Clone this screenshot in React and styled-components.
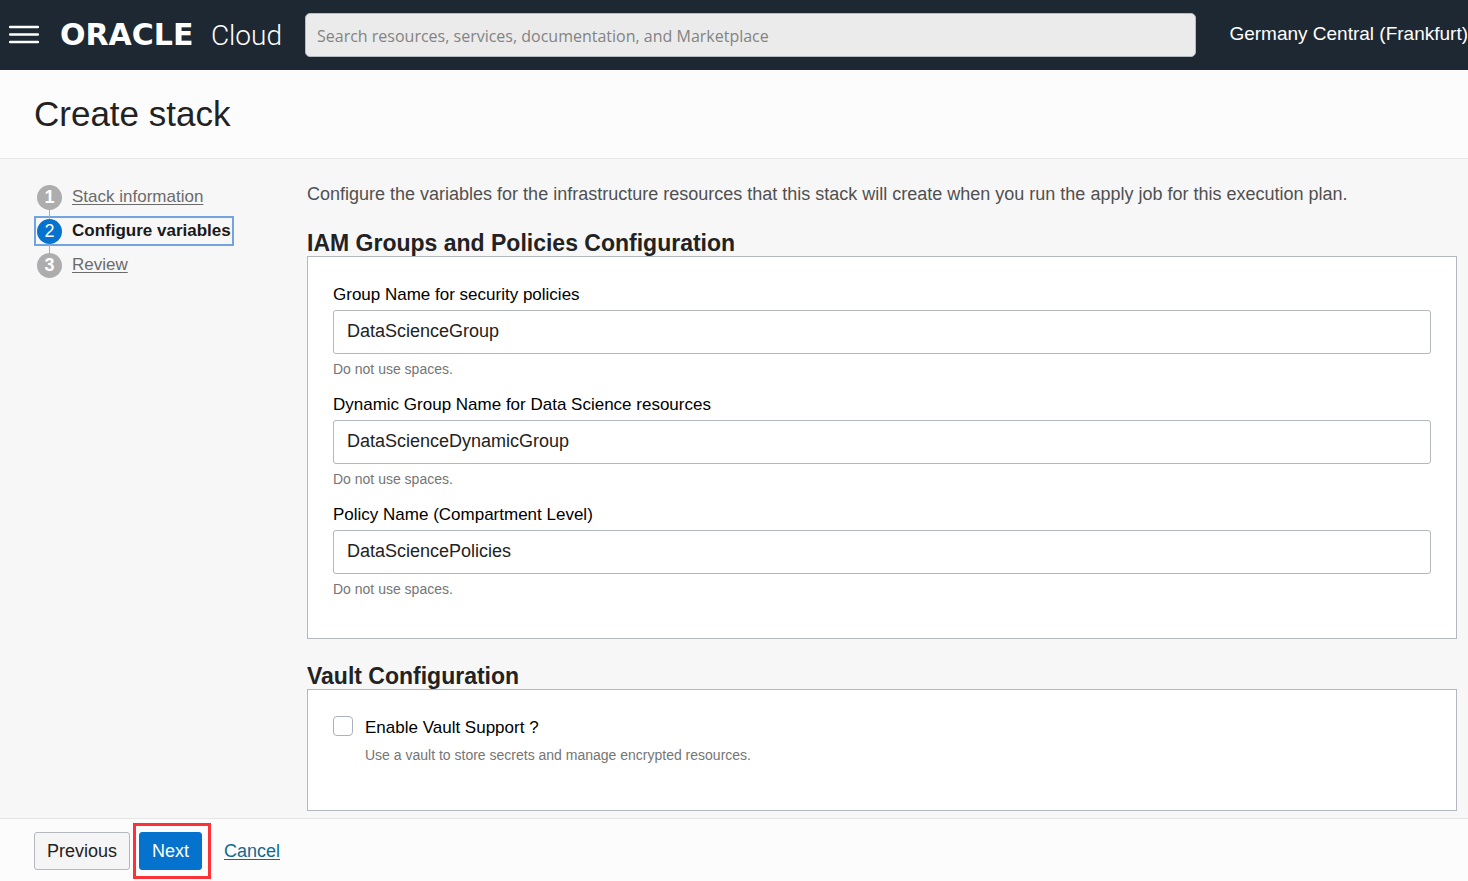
import React from "react";
import styled, { createGlobalStyle } from "styled-components";

const GlobalStyle = createGlobalStyle`
  *, *::before, *::after { box-sizing: border-box; }
  body {
    margin: 0;
    background: #f7f7f7;
    color: #222;
    font-family: "Liberation Sans", Arial, sans-serif;
    font-size: 18px;
    line-height: 24px;
  }
  button, input { font: inherit; color: inherit; }
  h1, h2, p, ol { margin: 0; padding: 0; }
`;

const Page = styled.div`
  display: flex;
  flex-direction: column;
  min-height: 100vh;
`;

const TopBar = styled.header`
  display: flex;
  align-items: center;
  height: 70px;
  padding-left: 9px;
  background: #1e2832;
  color: #fff;
`;

const MenuButton = styled.button`
  display: flex;
  width: 30px;
  height: 20px;
  padding: 0;
  border: 0;
  background: none;
  cursor: pointer;
`;

const Brand = styled.a`
  display: flex;
  align-items: baseline;
  justify-content: space-between;
  flex: none;
  width: 222px;
  margin: 0 23px 0 21px;
  color: #fff;
  line-height: 32px;
  text-decoration: none;
`;

const BrandName = styled.span`
  font-family: "DejaVu Sans", sans-serif;
  font-size: 30px;
  font-weight: 700;
`;

const BrandProduct = styled.span`
  font-family: Roboto, sans-serif;
  font-size: 28px;
  font-weight: 300;
`;

const SearchInput = styled.input`
  flex: 1;
  min-width: 0;
  height: 44px;
  padding: 2px 11px 0;
  border: 1px solid #b4bcc4;
  border-radius: 5px;
  background: #ebebeb;
  color: #222;
  font-family: "Open Sans", "Noto Sans", sans-serif;
  font-size: 16px;
  &::placeholder { color: #838383; opacity: 1; }
`;

const Region = styled.span`
  flex: none;
  margin-left: 33px;
  padding-bottom: 2px;
  font-size: 19px;
  white-space: nowrap;
`;

const TitleBar = styled.div`
  padding: 24px 34px;
  border-bottom: 1px solid #e5e5e5;
  background: #fcfcfc;
`;

const Title = styled.h1`
  font-size: 35px;
  font-weight: 400;
  line-height: 40px;
`;

const Body = styled.div`
  display: flex;
  flex: 1;
  padding: 23px 11px 7px 34px;
`;

const Steps = styled.ol`
  flex: 0 0 273px;
  list-style: none;
`;

const Step = styled.li`
  display: flex;
  height: 34px;
`;

const StepLink = styled.a`
  display: flex;
  align-items: center;
  gap: 10px;
  height: 30px;
  padding: 0 1px;
  border: 2px solid ${(p) => (p.$current ? "#74a4e0" : "transparent")};
  color: ${(p) => (p.$current ? "#1a1a1a" : "#6b6b6b")};
  font-size: 17px;
  font-weight: ${(p) => (p.$current ? 700 : 400)};
  text-decoration: none;
  white-space: nowrap;
`;

const StepName = styled.span`
  text-decoration: ${(p) => (p.$current ? "none" : "underline")};
  text-underline-offset: 2px;
`;

const StepNumber = styled.span`
  position: relative;
  width: 25px;
  height: 25px;
  border-radius: 50%;
  background: ${(p) => (p.$current ? "#0572ce" : "#adadad")};
  color: #fff;
  font-size: 18px;
  font-weight: ${(p) => (p.$current ? 400 : 700)};
  line-height: 25px;
  text-align: center;
  ${(p) =>
    !p.$last &&
    `&::after {
      content: "";
      position: absolute;
      top: 25px;
      left: 12px;
      width: 1px;
      height: 9px;
      background: #adadad;
    }`}
`;

const Main = styled.main`
  flex: 1;
  min-width: 0;
`;

const Intro = styled.p`
  color: #505050;
`;

const Section = styled.section`
  margin-top: 25px;
`;

const SectionTitle = styled.h2`
  font-size: 23px;
  font-weight: 700;
  line-height: 25px;
`;

const Panel = styled.div`
  padding: 26px 25px 25px;
  border: 1px solid #b2b8be;
  background: #fff;
`;

const Field = styled.div`
  display: flex;
  flex-direction: column;
  height: 110px;
`;

const Label = styled.label`
  color: #000;
  font-size: 17px;
  line-height: 23px;
`;

const TextInput = styled.input`
  width: 100%;
  height: 44px;
  margin: 4px 0;
  padding: 0 13px 2px;
  border: 1px solid #b2b8be;
  border-radius: 3px;
  background: #fff;
`;

const Hint = styled.p`
  color: #757575;
  font-size: 14px;
  line-height: 22px;
`;

const CheckField = styled.div`
  display: flex;
  gap: 12px;
  height: 69px;
`;

const Checkbox = styled.input`
  appearance: none;
  flex: none;
  width: 20px;
  height: 20px;
  margin: 0;
  border: 1px solid #aab2bc;
  border-radius: 4px;
  background: #fff;
  &:checked { background: #0572ce; }
`;

const CheckText = styled.div`
  display: flex;
  flex-direction: column;
  gap: 5px;
`;

const Footer = styled.footer`
  position: sticky;
  bottom: 0;
  display: flex;
  align-items: center;
  height: 63px;
  padding: 2px 34px 0;
  border-top: 1px solid #e5e5e5;
  background: #fcfcfc;
  font-size: 17px;
`;

const Button = styled.button`
  width: ${(p) => (p.$primary ? "63px" : "96px")};
  height: 38px;
  padding: 0;
  border: 1px solid ${(p) => (p.$primary ? "#0572ce" : "#b2b8be")};
  border-radius: 3px;
  background: ${(p) => (p.$primary ? "#0572ce" : "#f5f5f5")};
  color: ${(p) => (p.$primary ? "#fff" : "#222")};
  font-size: 18px;
  cursor: pointer;
`;

const Highlight = styled.div`
  display: flex;
  margin: 0 13px 0 3px;
  padding: 6px 6px 6px 3px;
  border: 3px solid #fb3237;
`;

const CancelLink = styled.a`
  color: #13698f;
  font-size: 18px;
  text-underline-offset: 2px;
`;

const steps = ["Stack information", "Configure variables", "Review"];

const fields = [
  { id: "group", label: "Group Name for security policies", value: "DataScienceGroup" },
  { id: "dynamic-group", label: "Dynamic Group Name for Data Science resources", value: "DataScienceDynamicGroup" },
  { id: "policy", label: "Policy Name (Compartment Level)", value: "DataSciencePolicies" },
];

export default function App() {
  return (
    <Page>
      <GlobalStyle />
      <TopBar>
        <MenuButton aria-label="Menu">
          <svg width="30" height="20" viewBox="0 0 30 20" aria-hidden="true">
            <path d="M1 2h28M1 9.5h28M1 17h28" stroke="#fff" strokeWidth="2.4" strokeLinecap="round" />
          </svg>
        </MenuButton>
        <Brand href="#home">
          <BrandName>ORACLE</BrandName>
          <BrandProduct>Cloud</BrandProduct>
        </Brand>
        <SearchInput
          type="search"
          aria-label="Search"
          placeholder="Search resources, services, documentation, and Marketplace"
        />
        <Region>Germany Central (Frankfurt)</Region>
      </TopBar>
      <TitleBar>
        <Title>Create stack</Title>
      </TitleBar>
      <Body>
        <Steps>
          {steps.map((name, i) => (
            <Step key={name}>
              <StepLink href={`#step-${i + 1}`} $current={i === 1} aria-current={i === 1 ? "step" : undefined}>
                <StepNumber $current={i === 1} $last={i === steps.length - 1}>
                  {i + 1}
                </StepNumber>
                <StepName $current={i === 1}>{name}</StepName>
              </StepLink>
            </Step>
          ))}
        </Steps>
        <Main>
          <Intro>
            Configure the variables for the infrastructure resources that this stack will create when you run the apply
            job for this execution plan.
          </Intro>
          <Section>
            <SectionTitle>IAM Groups and Policies Configuration</SectionTitle>
            <Panel>
              {fields.map((f) => (
                <Field key={f.id}>
                  <Label htmlFor={f.id}>{f.label}</Label>
                  <TextInput id={f.id} type="text" defaultValue={f.value} />
                  <Hint>Do not use spaces.</Hint>
                </Field>
              ))}
            </Panel>
          </Section>
          <Section>
            <SectionTitle>Vault Configuration</SectionTitle>
            <Panel>
              <CheckField>
                <Checkbox id="vault" type="checkbox" />
                <CheckText>
                  <Label htmlFor="vault">Enable Vault Support ?</Label>
                  <Hint>Use a vault to store secrets and manage encrypted resources.</Hint>
                </CheckText>
              </CheckField>
            </Panel>
          </Section>
        </Main>
      </Body>
      <Footer>
        <Button type="button">Previous</Button>
        <Highlight>
          <Button type="button" $primary>
            Next
          </Button>
        </Highlight>
        <CancelLink href="#cancel">Cancel</CancelLink>
      </Footer>
    </Page>
  );
}
